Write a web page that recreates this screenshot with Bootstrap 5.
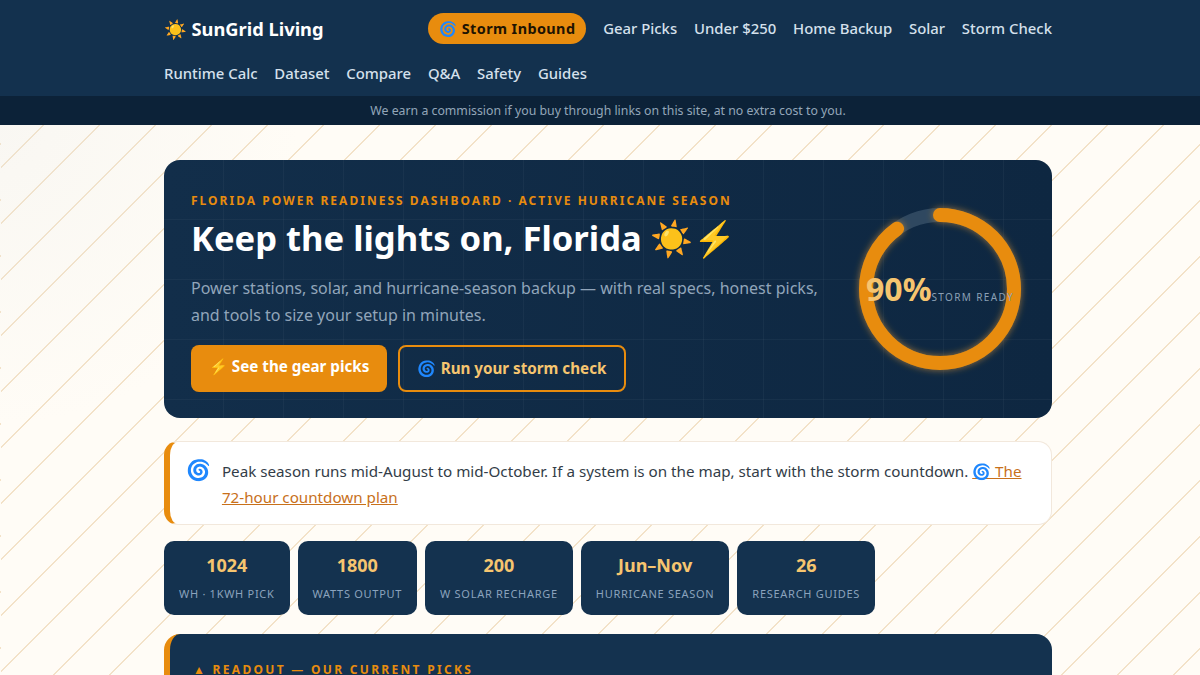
<!DOCTYPE html>
<html lang="en">
<head>
  <meta charset="UTF-8">
  <meta name="viewport" content="width=device-width, initial-scale=1.0">
  <title>SunGrid Living</title>
  <link href="https://cdn.jsdelivr.net/npm/bootstrap@5.3.0/dist/css/bootstrap.min.css" rel="stylesheet">
  <style>
    body {
      font-family: "Noto Sans", "Noto Color Emoji", sans-serif;
      color: #1f2a37;
      background-color: #fffcf6;
      background-image:
        radial-gradient(circle at 0 125px, rgba(225,228,228,.2), rgba(225,228,228,0) 300px),
        repeating-linear-gradient(135deg, #fffcf6 0 38.6px, #f3e2c8 38.6px 39.598px);
      background-position: 0 0, 1px 0;
    }
    .wrap { width: 888px; margin-left: 164px; }
    .site-head { background: #13314e; height: 96px; }
    .brand { color: #fff; font-size: 18.3px; font-weight: 700; text-decoration: none; line-height: 31px; }
    .top-link { color: #d5e0ec; font-size: 14.88px; font-weight: 500; text-decoration: none; }
    .head-links { gap: 16.8px; }
    .storm-pill { background: #e88c0e; color: #201302; font-size: 14.4px; font-weight: 700; text-decoration: none; border-radius: 16px; padding: 4.5px 11px; letter-spacing: .42px; }
    .row-one { height: 62px; padding-top: 13px; }
    .disclosure { background: #0c2238; color: #93a6b9; font-size: 12.32px; height: 29px; line-height: 29px; text-align: center; padding-left: 16px; }

    .hero {
      margin-top: 35px; height: 258px; border-radius: 16px; padding: 33px 27px 0;
      background-color: #12304c;
      background-image:
        linear-gradient(rgba(255,255,255,.035) 1px, transparent 1px),
        linear-gradient(90deg, rgba(255,255,255,.035) 1px, transparent 1px),
        linear-gradient(90deg, #122e4a, #0e2741);
      background-size: 60px 60px, 60px 60px, 100% 100%;
      background-position: -1px -1px, -1px -1px, 0 0;
    }
    .eyebrow { color: #e88c0e; font-size: 12px; font-weight: 700; letter-spacing: 2.02px; text-transform: uppercase; line-height: 16px; }
    .hero-title { color: #fff; font-size: 34.6px; font-weight: 700; line-height: 44px; margin: 7px 0 15px; }
    .hero-copy { color: #91a5ba; font-size: 16px; line-height: 27px; margin: 0 0 16px; width: 640px; }
    .cta-row { gap: 11px; }
    .cta { border-radius: 8px; font-size: 15.2px; font-weight: 700; height: 47px; display: inline-flex; align-items: center; text-decoration: none; }
    .cta-main { background: #e88c0e; color: #fff; padding: 0 18px 4px; }
    .cta-line { border: 2px solid #e88c0e; color: #f6c56f; padding: 0 17.5px; }
    .ring-box { width: 160px; height: 160px; flex: none; margin-top: 16px; margin-right: 5px; }
    .ring-box svg { overflow: visible; display: block; }
    .ring-text { inset: 0; }
    .ring-num { color: #f6c56f; font-size: 32px; font-weight: 700; line-height: 1; }
    .ring-label { color: #8ba0b6; font-size: 10px; letter-spacing: 1.35px; white-space: nowrap; text-transform: uppercase; }

    .notice { margin-top: 23px; background: #fff; border: 1px solid #f2e8dc; border-left: 6px solid #e88c0e; border-radius: 14px; padding: 16px 16px 13px 16px; font-size: 15.2px; line-height: 26px; color: #333d48; height: 84px; gap: 11px; }
    .notice-icon { font-size: 20px; line-height: 24px; }
    .notice a { color: #c8701a; }
    .stat-row { margin-top: 16px; }
    .stat-box { background: #14324f; border-radius: 10px; height: 74px; padding: 12px 15px 0; text-align: center; }
    .stat-num { color: #f6c56f; font-size: 18px; font-weight: 700; line-height: 25px; }
    .stat-label { color: #8ba3bd; font-size: 11px; letter-spacing: .715px; text-transform: uppercase; line-height: 16px; margin-top: 8px; white-space: nowrap; }
    .readout { margin-top: 19px; background: #14324f; border-left: 6px solid #e88c0e; border-radius: 16px; padding: 27px 23px; height: 200px; }
    .readout-head { color: #e88c0e; font-size: 12px; font-weight: 700; letter-spacing: 2.3px; text-transform: uppercase; line-height: 18px; }
  </style>
</head>
<body>
<header class="site-head">
  <div class="wrap">
    <div class="row-one d-flex justify-content-between align-items-start">
      <a class="brand" href="#">☀️ SunGrid Living</a>
      <nav class="d-flex align-items-center head-links">
        <a class="storm-pill" href="#">🌀 Storm Inbound</a>
        <a class="top-link" href="#">Gear Picks</a>
        <a class="top-link" href="#">Under $250</a>
        <a class="top-link" href="#">Home Backup</a>
        <a class="top-link" href="#">Solar</a>
        <a class="top-link" href="#">Storm Check</a>
      </nav>
    </div>
    <nav class="d-flex head-links">
      <a class="top-link" href="#">Runtime Calc</a>
      <a class="top-link" href="#">Dataset</a>
      <a class="top-link" href="#">Compare</a>
      <a class="top-link" href="#">Q&amp;A</a>
      <a class="top-link" href="#">Safety</a>
      <a class="top-link" href="#">Guides</a>
    </nav>
  </div>
</header>
<div class="disclosure">We earn a commission if you buy through links on this site, at no extra cost to you.</div>

<main class="wrap">
  <section class="hero d-flex justify-content-between">
    <div>
      <div class="eyebrow">Florida Power Readiness Dashboard · Active Hurricane Season</div>
      <h1 class="hero-title">Keep the lights on, Florida ☀️⚡</h1>
      <p class="hero-copy">Power stations, solar, and hurricane-season backup — with real specs, honest picks, and tools to size your setup in minutes.</p>
      <div class="d-flex cta-row">
        <a class="cta cta-main" href="#">⚡ See the gear picks</a>
        <a class="cta cta-line" href="#">🌀 Run your storm check</a>
      </div>
    </div>
    <div class="ring-box position-relative">
      <svg width="160" height="160" viewBox="0 0 160 160">
        <defs>
          <filter id="glow" x="-20%" y="-20%" width="140%" height="140%"><feGaussianBlur stdDeviation="3.5"/></filter>
        </defs>
        <circle cx="80" cy="80" r="74" fill="none" stroke="#2f4860" stroke-width="14"/>
        <circle cx="80" cy="80" r="74" fill="none" stroke="#f0a030" stroke-opacity=".6" stroke-width="14" stroke-linecap="round" stroke-dasharray="418.5 465" transform="rotate(-90 80 80)" filter="url(#glow)"/>
        <circle cx="80" cy="80" r="74" fill="none" stroke="#e88c0e" stroke-width="14" stroke-linecap="round" stroke-dasharray="418.5 465" transform="rotate(-90 80 80)"/>
      </svg>
      <div class="ring-text position-absolute d-flex justify-content-center align-items-center">
        <div class="d-flex align-items-baseline">
          <span class="ring-num">90%</span><span class="ring-label">Storm Ready</span>
        </div>
      </div>
    </div>
  </section>

  <section class="notice d-flex">
    <span class="notice-icon">🌀</span>
    <div>Peak season runs mid-August to mid-October. If a system is on the map, start with the storm countdown. <a href="#">🌀 The 72-hour countdown plan</a></div>
  </section>

  <section class="stat-row d-flex gap-2">
    <div class="stat-box"><div class="stat-num">1024</div><div class="stat-label">Wh · 1kWh pick</div></div>
    <div class="stat-box"><div class="stat-num">1800</div><div class="stat-label">Watts output</div></div>
    <div class="stat-box"><div class="stat-num">200</div><div class="stat-label">W solar recharge</div></div>
    <div class="stat-box"><div class="stat-num">Jun–Nov</div><div class="stat-label">Hurricane season</div></div>
    <div class="stat-box"><div class="stat-num">26</div><div class="stat-label">Research guides</div></div>
  </section>

  <section class="readout">
    <div class="readout-head">▲ Readout — our current picks</div>
  </section>
</main>

<script src="https://cdn.jsdelivr.net/npm/bootstrap@5.3.0/dist/js/bootstrap.bundle.min.js"></script>
</body>
</html>
